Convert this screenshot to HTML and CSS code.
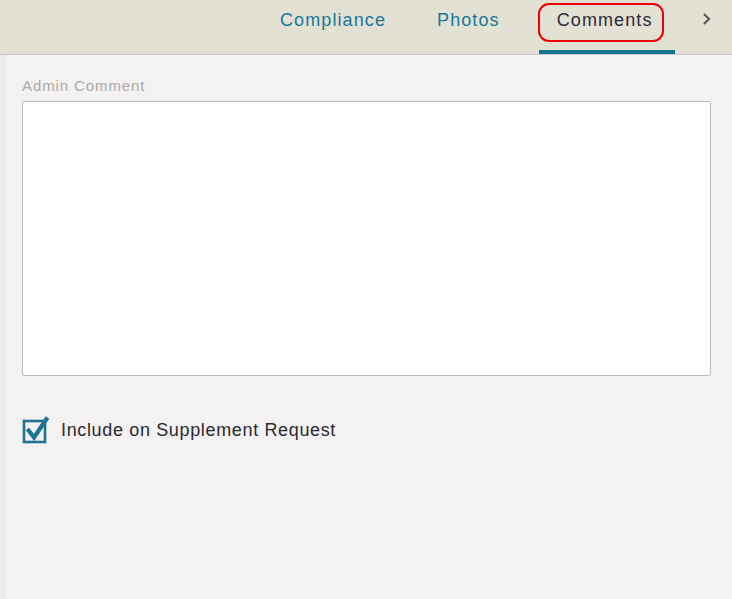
FILE: index.html
```html
<!DOCTYPE html>
<html lang="en">

<head>
    <meta charset="UTF-8">
    <title>Comments</title>
    <link rel="stylesheet" href="styles.css">
</head>

<body>
    <div class="panel">
        <div class="tabs">
            <div class="tab">Compliance</div>
            <div class="tab">Photos</div>
            <div class="tab active">
                <span class="ring"></span>
                Comments
            </div>
            <div class="more">
                <svg width="10" height="14" viewBox="0 0 10 14">
                    <path d="M2 2 L7 7 L2 12" fill="none" stroke="#555" stroke-width="2"/>
                </svg>
            </div>
        </div>

        <div class="content">
            <label class="label">Admin Comment</label>
            <textarea class="comment"></textarea>

            <div class="check-row">
                <svg class="check" width="28" height="28" viewBox="0 0 28 28">
                    <rect x="2" y="5" width="21" height="21" fill="none" stroke="#1b7491" stroke-width="2.6"/>
                    <path d="M5.5 13 L12 21.5 L25.5 1.5" fill="none" stroke="#1b7491" stroke-width="4.2" stroke-linejoin="miter"/>
                </svg>
                <span>Include on Supplement Request</span>
            </div>
        </div>
    </div>
</body>

</html>
```

FILE: styles.css
```css
html,
body {
    margin: 0;
    height: 100%;
    background: #f3f1f2;
    font-family: "Liberation Sans", Arial, sans-serif;
    overflow: hidden;
}

.panel {
    height: 100%;
    border-left: 6px solid #ececec;
    box-sizing: border-box;
}

.tabs {
    height: 54px;
    margin-left: -6px;
    background: #e3e1d4;
    border-bottom: 1px solid #c9c9c6;
    display: flex;
    align-items: stretch;
    padding-left: 268px;
}

.tab {
    position: relative;
    padding: 10px 12px 0;
    margin-right: 27px;
    font-size: 18px;
    letter-spacing: 1.1px;
    color: #18789a;
    box-sizing: border-box;
}

.tab.active {
    color: #2b2b33;
    padding-left: 18px;
    padding-right: 22px;
    margin-right: 27px;
    border-bottom: 4px solid #17758f;
}

.ring {
    position: absolute;
    left: -1px;
    top: 3px;
    width: 122px;
    height: 35px;
    border: 2px solid #f00000;
    border-radius: 11px;
}

.more {
    padding-top: 12px;
}

.content {
    padding: 22px 21px 0 16px;
}

.label {
    display: block;
    font-size: 15px;
    letter-spacing: 0.9px;
    color: #a9a9a9;
    margin-bottom: 7px;
}

.comment {
    display: block;
    width: 100%;
    height: 275px;
    box-sizing: border-box;
    border: 1px solid #bdbdbd;
    border-radius: 2px;
    background: #fff;
    resize: none;
    margin: 0;
}

.check-row {
    display: flex;
    align-items: center;
    margin-top: 40px;
    font-size: 18px;
    letter-spacing: 0.65px;
    color: #2a2a30;
}

.check {
    margin-right: 11px;
}
```
